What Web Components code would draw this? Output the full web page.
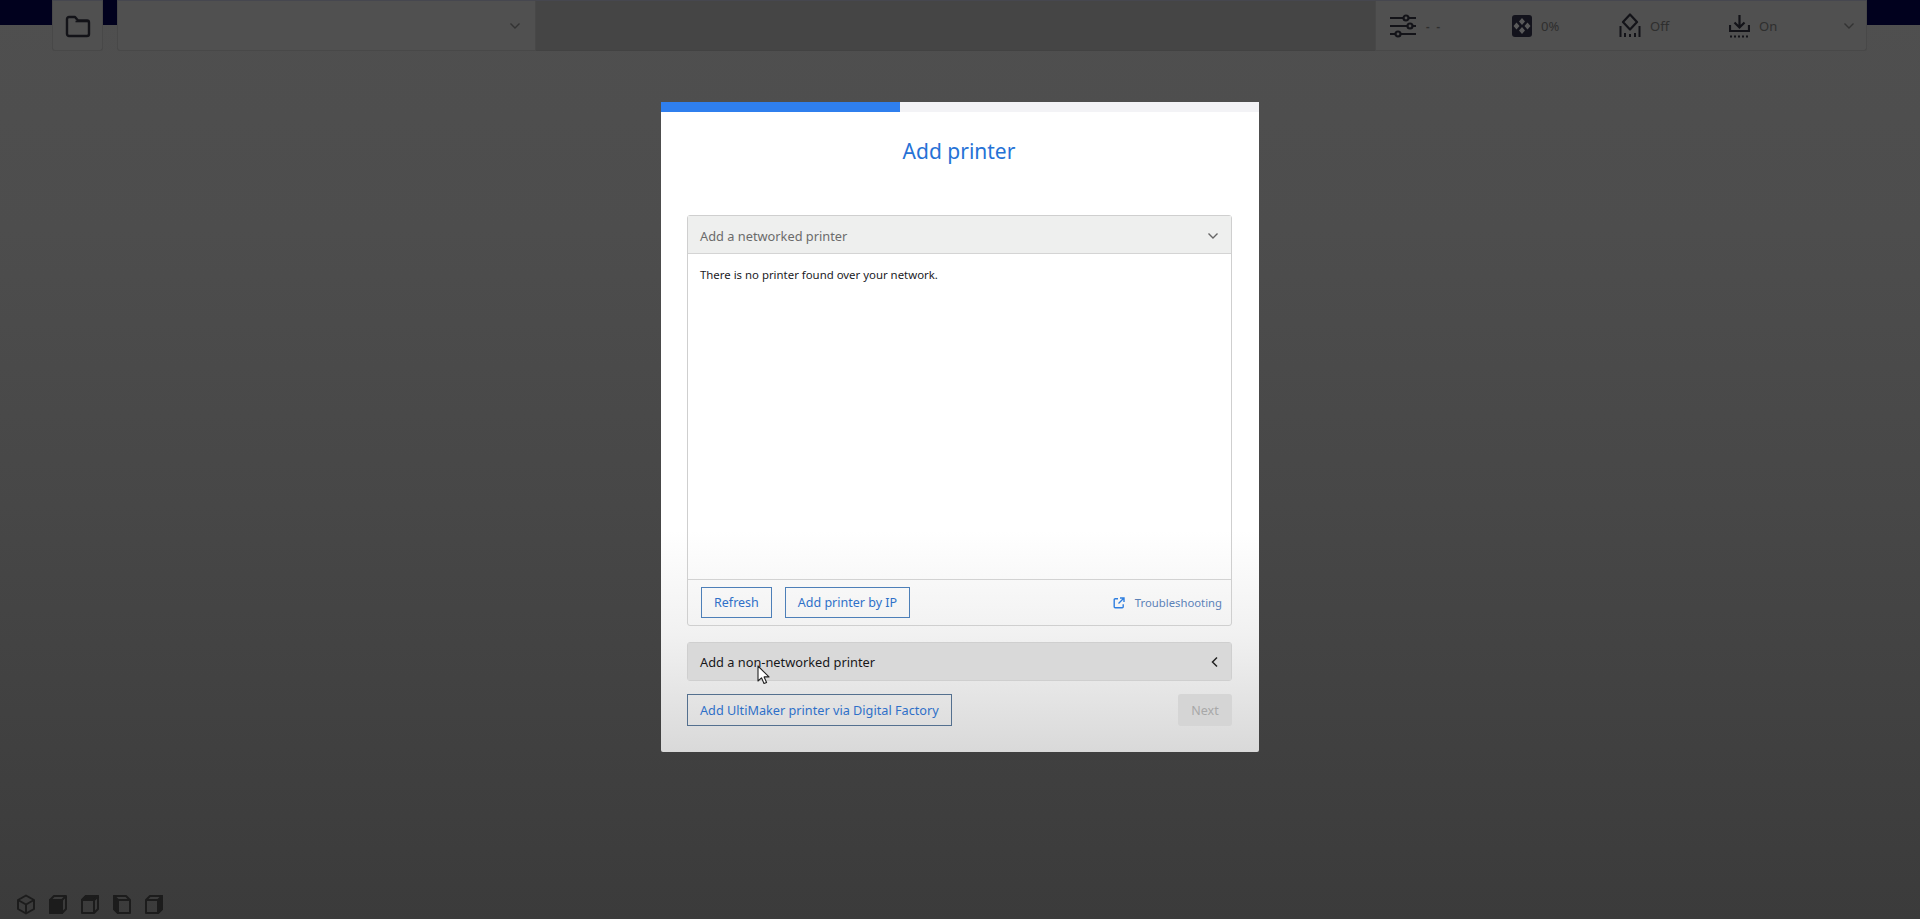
<!DOCTYPE html>
<html>
<head>
<meta charset="utf-8">
<title>Add printer</title>
<style>
html, body { margin: 0; height: 100%; }
body { font-family: "Noto Sans", "Open Sans", sans-serif; overflow: hidden; }
</style>
</head>
<body>
<cura-shell>
    <cura-topbar slot="top"></cura-topbar>
    <add-printer-dialog>
        <wizard-panel title-text="Add a networked printer" state="open">
            <p>There is no printer found over your network.</p>
            <outline-button slot="actions">Refresh</outline-button>
            <outline-button slot="actions">Add printer by IP</outline-button>
            <help-link slot="link">Troubleshooting</help-link>
        </wizard-panel>
        <wizard-panel title-text="Add a non-networked printer" state="closed"></wizard-panel>
        <outline-button slot="footer" wide>Add UltiMaker printer via Digital Factory</outline-button>
        <next-button slot="footer">Next</next-button>
    </add-printer-dialog>
    <view-cubes slot="bottom"></view-cubes>
</cura-shell>

<script>
const chevronDown = `<svg width="12" height="8" viewBox="0 0 12 8" fill="none" stroke="currentColor" stroke-width="1.4"><path d="M1.5 1.5 6 6l4.5-4.5"/></svg>`;
const chevronLeft = `<svg width="8" height="12" viewBox="0 0 8 12" fill="none" stroke="currentColor" stroke-width="1.5"><path d="M6 1.5 1.5 6 6 10.5"/></svg>`;

customElements.define('cura-shell', class extends HTMLElement {
    constructor() {
        super();
        this.attachShadow({mode: 'open'}).innerHTML = `
            <style>
            :host {
                display: flex;
                flex-direction: column;
                height: 919px;
                background: linear-gradient(#4f4f4f 0, #4d4d4d 25%, #474747 55%, #3b3b3b 100%);
            }
            .middle { flex: 1; display: flex; justify-content: center; padding-top: 51px; min-height: 0; }
            .bottom { height: 0; }
            </style>
            <slot name="top"></slot>
            <div class="middle"><slot></slot></div>
            <div class="bottom"><slot name="bottom"></slot></div>
        `;
    }
});

customElements.define('cura-topbar', class extends HTMLElement {
    constructor() {
        super();
        this.attachShadow({mode: 'open'}).innerHTML = `
            <style>
            :host {
                display: flex;
                height: 51px;
                padding-left: 52px;
                padding-right: 53px;
                color: #131318;
                background: linear-gradient(#01011e, #01011e) top / 100% 25px no-repeat;
                box-sizing: border-box;
            }
            .tile { box-sizing: border-box; height: 51px; background: #505050; border: 1px solid #484848; border-top: 1px solid #46474f; }
            .open { width: 51px; border-radius: 0 0 3px 3px; display: flex; align-items: center; justify-content: center; margin-right: 14px; }
            .select { width: 419px; border-radius: 0 0 0 3px; display: flex; align-items: center; justify-content: flex-end; padding-right: 14px; color: #333; }
            .fill { flex: 1; background: #454545; border-top: 1px solid #46474f; border-bottom: 1px solid #424242; }
            .settings { width: 492px; border-radius: 0 0 3px 0; display: flex; align-items: center; font: 13px "Noto Sans", sans-serif; position: relative; }
            .item { display: flex; align-items: center; gap: 9px; }
            .item span { color: #2e2e2e; }
            .i1 { margin-left: 14px; width: 122px; }
            .i1 span { letter-spacing: 2px; font-weight: 700; font-size: 11px; }
            .i2 { width: 107px; }
            .i3 { width: 110px; }
            .i4 { flex: 1; }
            .more { margin-right: 11px; color: #333; display: flex; }
            svg { display: block; }
            </style>
            <div class="tile open">
                <svg width="26" height="24" viewBox="0 0 26 24" fill="none" stroke="currentColor" stroke-width="2.4" stroke-linejoin="round"><path d="M2 5a2 2 0 0 1 2-2h6l3 3.500h9a2 2 0 0 1 2 2V20a2 2 0 0 1-2 2H4a2 2 0 0 1-2-2z"/><path d="M10.500 7.500H24" stroke-width="1.600"/></svg>
            </div>
            <div class="tile select">${chevronDown}</div>
            <div class="fill"></div>
            <div class="tile settings">
                <div class="item i1">
                    <svg width="27" height="24" viewBox="0 0 27 24" fill="none" stroke="currentColor" stroke-width="2.2"><path d="M0 4h13M19 4h7M0 12h17M23 12h3M0 20h5M11 20h15"/><circle cx="16" cy="4" r="2.500"/><circle cx="20" cy="12" r="2.500"/><circle cx="8" cy="20" r="2.500"/></svg>
                    <span>- -</span>
                </div>
                <div class="item i2">
                    <svg width="20" height="22" viewBox="0 0 20 22"><rect width="20" height="22" rx="3" fill="#13131c"/><g fill="#5a5a5a"><path d="M10 3l3 3.500-3 3.500-3-3.500zM10 12l3 3.500-3 3.500-3-3.500zM4.500 7.500l3 3.500-3 3.500-3-3.500zM15.500 7.500l3 3.500-3 3.500-3-3.500z"/></g></svg>
                    <span>0%</span>
                </div>
                <div class="item i3">
                    <svg width="22" height="25" viewBox="0 0 22 25" fill="none" stroke="currentColor" stroke-width="2.2"><path d="M11 1.500 18 9l-7 7.500L4 9z" stroke-linejoin="round"/><path d="M1.500 13v11M20.500 13v11M6 20v4M11 21v3M16 20v4" stroke-width="2"/></svg>
                    <span>Off</span>
                </div>
                <div class="item i4">
                    <svg width="21" height="24" viewBox="0 0 21 24" fill="none" stroke="currentColor" stroke-width="2.2"><path d="M10.500 1v12M5.500 8.500l5 5 5-5"/><path d="M1 11v6h19v-6"/><path d="M1 22.500h19" stroke-dasharray="2 2"/></svg>
                    <span>On</span>
                </div>
                <div class="more">${chevronDown}</div>
            </div>
        `;
    }
});

customElements.define('add-printer-dialog', class extends HTMLElement {
    constructor() {
        super();
        this.attachShadow({mode: 'open'}).innerHTML = `
            <style>
            :host {
                display: flex;
                flex-direction: column;
                box-sizing: border-box;
                width: 598px;
                height: 650px;
                border-radius: 2px;
                background: linear-gradient(#fff 0, #fff 66%, #f1f1f1 82%, #d9d9d9 100%);
                position: relative;
            }
            .progress { height: 10px; background: #f3f3f6; flex: none; }
            .progress div { height: 100%; width: 239px; background: #2f7fee; }
            h1 { margin: 19px 2px 0 0; height: 40px; text-align: center; font: 400 21px/40px "Noto Sans", sans-serif; color: #2672d6; }
            .body { display: flex; flex-direction: column; gap: 16px; margin: 44px 27px 0 26px; }
            .footer { display: flex; justify-content: space-between; margin: 13px 27px 0 26px; }
            .cursor { position: absolute; left: 96px; top: 563px; }
            </style>
            <div class="progress"><div></div></div>
            <h1>Add printer</h1>
            <div class="body"><slot></slot></div>
            <div class="footer"><slot name="footer"></slot></div>
            <svg class="cursor" width="14" height="20" viewBox="0 0 14 20"><path d="M1 1v15l3.500-3.200 2.500 5.700 2.600-1.100-2.500-5.500H12z" fill="#fff" stroke="#222" stroke-width="1.100" stroke-linejoin="round"/></svg>
        `;
    }
});

customElements.define('wizard-panel', class extends HTMLElement {
    constructor() {
        super();
        const open = this.getAttribute('state') === 'open';
        this.attachShadow({mode: 'open'}).innerHTML = `
            <style>
            :host {
                display: block;
                box-sizing: border-box;
                border: 1px solid #cfcfcf;
                border-radius: 3px;
                font-size: 12px;
                color: #1b1b1f;
            }
            .head {
                display: flex;
                align-items: center;
                justify-content: space-between;
                box-sizing: border-box;
                height: ${open ? 38 : 37}px;
                padding: ${open ? 2 : 0}px 12px 0 12px;
                background: ${open ? '#eeefee' : '#d9d9d9'};
                font-size: 12.8px;
                color: ${open ? '#6b6b6b' : '#17171a'};
            }
            .head.open { border-bottom: 1px solid #d4d4d4; }
            .content { height: 325px; padding: 0 12px; box-sizing: border-box; overflow: hidden; }
            .actions { height: 45px; display: flex; align-items: center; justify-content: space-between; padding: 0 9px 0 13px; border-top: 1px solid #d2d2d2; }
            .left { display: flex; gap: 13px; }
            svg { display: block; }
            ::slotted(p) { margin: 0; padding-top: 13px; line-height: 16px; font-size: 11.4px; }
            </style>
            <div class="head ${open ? 'open' : ''}">
                <span>${this.getAttribute('title-text')}</span>
                ${open ? `<span style="color:#666">${chevronDown}</span>` : `<span style="color:#222">${chevronLeft}</span>`}
            </div>
            ${open ? `
            <div class="content"><slot></slot></div>
            <div class="actions">
                <div class="left"><slot name="actions"></slot></div>
                <slot name="link"></slot>
            </div>` : ''}
        `;
    }
});

customElements.define('outline-button', class extends HTMLElement {
    constructor() {
        super();
        this.attachShadow({mode: 'open'}).innerHTML = `
            <style>
            :host {
                display: inline-flex;
                align-items: center;
                box-sizing: border-box;
                height: 31px;
                padding: 0 12px;
                border: 1px solid #4d7fb8;
                font-size: 12.5px;
                color: #2f70c8;
                white-space: nowrap;
            }
            :host([wide]) { height: 32px; padding: 0 12px; border-color: #54708f; width: 265px; font-size: 12.7px; }
            </style>
            <slot></slot>
        `;
    }
});

customElements.define('next-button', class extends HTMLElement {
    constructor() {
        super();
        this.attachShadow({mode: 'open'}).innerHTML = `
            <style>
            :host {
                display: inline-flex;
                align-items: center;
                justify-content: center;
                box-sizing: border-box;
                width: 54px;
                height: 32px;
                border-radius: 3px;
                background: #d5d5d5;
                font-size: 12.5px;
                color: #a8a8a8;
            }
            </style>
            <slot></slot>
        `;
    }
});

customElements.define('help-link', class extends HTMLElement {
    constructor() {
        super();
        this.attachShadow({mode: 'open'}).innerHTML = `
            <style>
            :host { display: inline-flex; align-items: center; gap: 10px; font-size: 11.3px; color: #5c82b8; }
            svg { display: block; color: #2f7fe0; }
            </style>
            <svg width="12" height="12" viewBox="0 0 12 12" fill="none" stroke="currentColor" stroke-width="1.4"><path d="M5 1.700H2.200a1 1 0 0 0-1 1v7a1 1 0 0 0 1 1h7a1 1 0 0 0 1-1V7.300"/><path d="M7 1h4v4M11 1 5.500 6.500"/></svg>
            <slot></slot>
        `;
    }
});

customElements.define('view-cubes', class extends HTMLElement {
    constructor() {
        super();
        const wire = '<path d="M10 1.500 18 6v9l-8 4.500L2 15V6z" fill="none"/>';
        this.attachShadow({mode: 'open'}).innerHTML = `
            <style>
            :host { display: flex; gap: 12px; position: relative; top: -25px; left: 16px; width: max-content; color: #1c1c1c; }
            svg { display: block; }
            g { fill: none; stroke: currentColor; stroke-width: 2; stroke-linejoin: round; }
            </style>
            <svg width="20" height="21" viewBox="0 0 20 21"><g>${wire}<path d="M2 6l8 4.500L18 6M10 10.500v9"/></g></svg>
            <svg width="20" height="21" viewBox="0 0 20 21"><g><path d="M6 2h12v13l-4 4H2V6z"/><path d="M2 6h12v13H2z" fill="currentColor"/><path d="M14 6l4-4"/></g></svg>
            <svg width="20" height="21" viewBox="0 0 20 21"><g><path d="M6 2h12v13l-4 4H2V6z"/><path d="M2 6 6 2h12l-4 4z" fill="currentColor"/><path d="M2 6h12v13M14 6l4-4"/></g></svg>
            <svg width="20" height="21" viewBox="0 0 20 21"><g><path d="M2 2h12l4 4v13H6l-4-4z"/><path d="M2 2l4 4v13l-4-4z" fill="currentColor"/><path d="M6 6h12"/></g></svg>
            <svg width="20" height="21" viewBox="0 0 20 21"><g><path d="M6 2h12v13l-4 4H2V6z"/><path d="M14 6l4-4v13l-4 4z" fill="currentColor"/><path d="M2 6h12v13"/></g></svg>
        `;
    }
});
</script>
</body>
</html>
